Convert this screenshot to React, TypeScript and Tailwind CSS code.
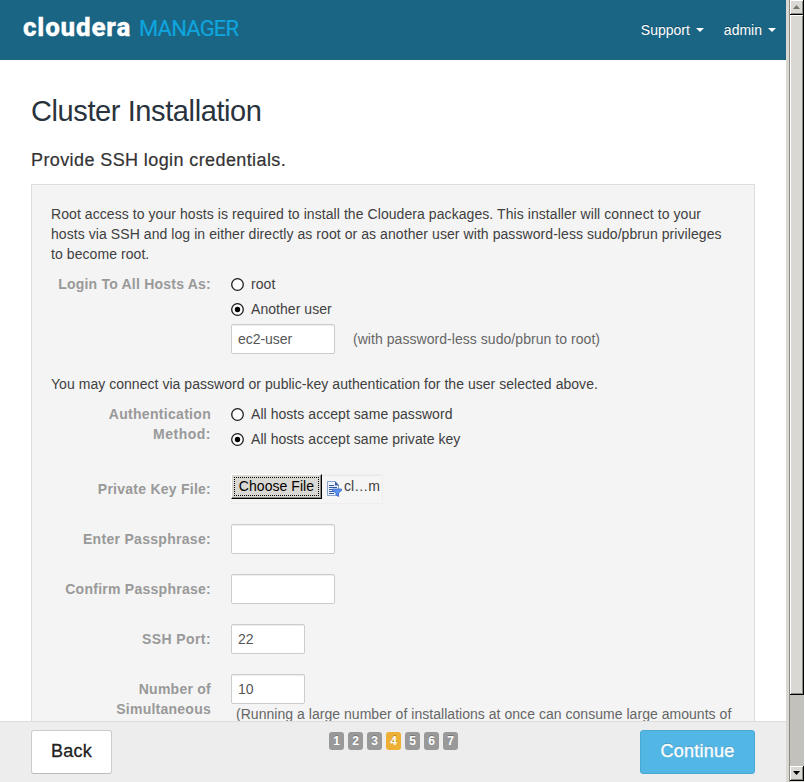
import type { ReactNode } from 'react';

function NavItem({ children, className }: { children: ReactNode; className: string }) {
  return (
    <div className={`flex items-center gap-1.5 ${className}`}>
      <span>{children}</span>
      <svg width="8" height="4" viewBox="0 0 8 4"><path d="M0 0h8L4 4z" fill="#fff" /></svg>
    </div>
  );
}

function Row({ label, children, className = '' }: { label: ReactNode; children: ReactNode; className?: string }) {
  return (
    <div className={`flex gap-5 ${className}`}>
      <div className="w-40 shrink-0 whitespace-nowrap text-right font-bold text-[#999]">{label}</div>
      {children}
    </div>
  );
}

function Radio({ checked = false, children }: { checked?: boolean; children: ReactNode }) {
  return (
    <label className="flex h-5 items-center gap-[7px] whitespace-nowrap">
      <svg className="mt-px" width="13" height="13" viewBox="0 0 13 13">
        <circle cx="6.5" cy="6.5" r="5.8" fill="#fff" stroke="#1c1c1c" strokeWidth="1.3" />
        {checked && <circle cx="6.5" cy="6.5" r="2.7" fill="#000" />}
      </svg>
      {children}
    </label>
  );
}

function Field({ children, className }: { children?: ReactNode; className: string }) {
  return (
    <div className={`flex h-[30px] items-center rounded-xs border border-[#ccc] bg-white px-1.5 text-[#555] shadow-[inset_0_1px_1px_rgba(0,0,0,0.075)] ${className}`}>
      {children}
    </div>
  );
}

function ScrollButton({ down = false }: { down?: boolean }) {
  return (
    <div className="flex h-[15px] shrink-0 items-center justify-center border-r border-b border-black bg-[#dad8d3] pb-px shadow-[inset_1px_1px_#fff,inset_-1px_-1px_#8c8a84]">
      <svg width="7" height="4" viewBox="0 0 7 4">
        <path d={down ? 'M0 0h7L3.5 4z' : 'M0 4h7L3.5 0z'} fill={down ? '#000' : '#77756f'} />
      </svg>
    </div>
  );
}

const steps = [1, 2, 3, 4, 5, 6, 7];

export default function App() {
  return (
    <div className="flex h-[782px] w-[805px] overflow-hidden bg-white font-['Liberation_Sans',Arial,sans-serif] text-sm leading-5 text-[#404040]">
      <div className="flex w-[786px] shrink-0 flex-col">
        <header className="flex h-[60px] shrink-0 justify-between bg-[#1a6484] pr-[10px] pl-[23px]">
          <div className="flex items-baseline pt-[12px] font-['Roboto',sans-serif] leading-[30px]">
            <span className="w-[116px] text-[26px] font-extrabold tracking-[0.8px] text-white [-webkit-text-stroke:0.3px_#fff]">cloudera</span>
            <span className="text-[22px] tracking-[-0.8px] text-[#0fa5de] [-webkit-text-stroke:0.2px_#0fa5de]">MANAGER</span>
          </div>
          <div className="flex h-[60px] items-center text-white [text-shadow:0_-1px_0_rgba(0,0,0,0.25)]">
            <NavItem className="mr-5">Support</NavItem>
            <NavItem className="">admin</NavItem>
          </div>
        </header>

        <main className="min-h-0 flex-1 overflow-hidden pr-[31px] pl-[31px]">
          <h1 className="mt-[31px] h-10 whitespace-nowrap text-[29px] leading-10 tracking-[-0.4px] text-[#29333d]">Cluster Installation</h1>
          <h2 className="mt-[18px] h-[22px] whitespace-nowrap text-lg leading-[22px] tracking-[0.4px] text-[#333] [-webkit-text-stroke:0.2px_#333]">Provide SSH login credentials.</h2>

          <section className="mt-[13px] h-[700px] border border-[#ddd] bg-[#f4f4f4] px-[19px] pt-[19px] tracking-[0.05px]">
            <p className="whitespace-nowrap tracking-[0.07px]">
              Root access to your hosts is required to install the Cloudera packages. This installer will connect to your<br />
              hosts via SSH and log in either directly as root or as another user with password-less sudo/pbrun privileges<br />
              to become root.
            </p>
            <Row className="mt-[10px]" label={<span className="tracking-[0.22px]">Login To All Hosts As:</span>}>
              <div className="flex flex-col gap-[5px]">
                <Radio>root</Radio>
                <Radio checked>Another user</Radio>
                <div className="flex items-center gap-[18px]">
                  <Field className="w-[104px]"><span className="tracking-[-0.05px]">ec2-user</span></Field>
                  <span className="whitespace-nowrap text-[#666]">(with password-less sudo/pbrun to root)</span>
                </div>
              </div>
            </Row>
            <p className="mt-5 whitespace-nowrap tracking-[0.04px]">You may connect via password or public-key authentication for the user selected above.</p>
            <Row className="mt-[10px]" label={<span className="tracking-[0.3px]">Authentication<br /><span className="tracking-[0.5px]">Method:</span></span>}>
              <div className="flex flex-col gap-[5px]">
                <Radio>All hosts accept same password</Radio>
                <Radio checked>All hosts accept same private key</Radio>
              </div>
            </Row>
            <Row className="mt-[25px] items-center" label={<span className="tracking-[0.25px]">Private Key File:</span>}>
              <div className="flex h-[30px] w-[152px] items-start border border-[#eee] bg-[#f5f5f5] shadow-[inset_0_1px_1px_rgba(0,0,0,0.05)]">
                <div className="-mt-px -ml-px flex h-[25px] w-[91px] shrink-0 items-stretch border-t border-r border-b border-l border-t-white border-r-black border-b-black border-l-white bg-[#dad8d3] p-[2px] text-black shadow-[inset_-1px_-1px_#8c8a84]">
                  <span className="flex flex-1 items-center justify-center whitespace-nowrap border border-dotted border-black pb-px">Choose File</span>
                </div>
                <svg className="mt-[6px] ml-[4px] shrink-0" width="16" height="16" viewBox="0 0 16 16">
                  <path d="M1.5.5h8L12.5 4v10.5h-11z" fill="#eaf2ff" stroke="#8aa4cf" />
                  <path d="M9 .5V4.5h4z" fill="#34599c" />
                  <path d="M3 4.5h5M3 6.5h8M3 8.5h5M3 10.5h5M3 12.5h5" stroke="#34599c" />
                  <path d="M6.5 8h9v1.5L12.5 12v3.5L10 14v-2L6.5 9.5z" fill="#5b91ef" stroke="#2b5fc4" strokeWidth=".7" />
                </svg>
                <span className="ml-[2px] pt-[1px] leading-5">cl…m</span>
              </div>
            </Row>
            <Row className="mt-5 items-center" label={<span className="tracking-[0.3px]">Enter Passphrase:</span>}>
              <Field className="w-[104px]" />
            </Row>
            <Row className="mt-5 items-center" label={<span className="tracking-[0.26px]">Confirm Passphrase:</span>}>
              <Field className="w-[104px]" />
            </Row>
            <Row className="mt-5 items-center" label={<span className="tracking-[0.4px]">SSH Port:</span>}>
              <Field className="w-[74px]">22</Field>
            </Row>
            <Row className="mt-5" label={<div className="pt-[5px] tracking-[0.25px]">Number of<br />Simultaneous</div>}>
              <div>
                <Field className="w-[74px]">10</Field>
                <p className="whitespace-nowrap pl-[5px] tracking-[0.035px] text-[#666]">(Running a large number of installations at once can consume large amounts of</p>
              </div>
            </Row>
          </section>
        </main>

        <footer className="flex h-[61px] shrink-0 items-start border-t border-[#ddd] bg-[#ededed] px-[31px] pt-2">
          <button className="h-11 w-[81px] rounded-[3px] border border-[#ccc] border-b-[#bbb] bg-white pb-[2px] text-lg tracking-[0.25px] text-[#222] [-webkit-text-stroke:0.3px_#222]">Back</button>
          <div className="ml-[217px] flex gap-1 pt-[2px]">
            {steps.map((n) => (
              <span key={n} className={`flex h-[18px] w-[15px] items-center justify-center rounded-[3px] pb-px text-xs font-bold text-white [text-shadow:0_-1px_0_rgba(0,0,0,0.25)] ${n === 4 ? 'bg-[#edaf34]' : 'bg-[#999]'}`}>{n}</span>
            ))}
          </div>
          <button className="ml-auto h-11 w-[115px] rounded-[3px] border border-[#48a9d3] bg-[#53b7e6] pb-[2px] text-lg tracking-[0.25px] text-white [-webkit-text-stroke:0.3px_#fff] [text-shadow:0_-1px_0_rgba(0,0,0,0.25)]">Continue</button>
        </footer>
      </div>

      <div className="w-[3px] shrink-0 bg-[#dad8d3]" />
      <div className="flex w-[15px] shrink-0 flex-col border-l border-[#8c8a84] bg-[#c3c1bb]">
        <ScrollButton />
        <div className="h-[680px] shrink-0 border-r border-b border-black bg-[#dad8d3] shadow-[inset_1px_1px_#fff,inset_-1px_-1px_#8c8a84]" />
        <div className="flex-1" />
        <ScrollButton down />
        <div className="h-px bg-[#dad8d3]" />
      </div>
      <div className="w-px bg-white" />
    </div>
  );
}
